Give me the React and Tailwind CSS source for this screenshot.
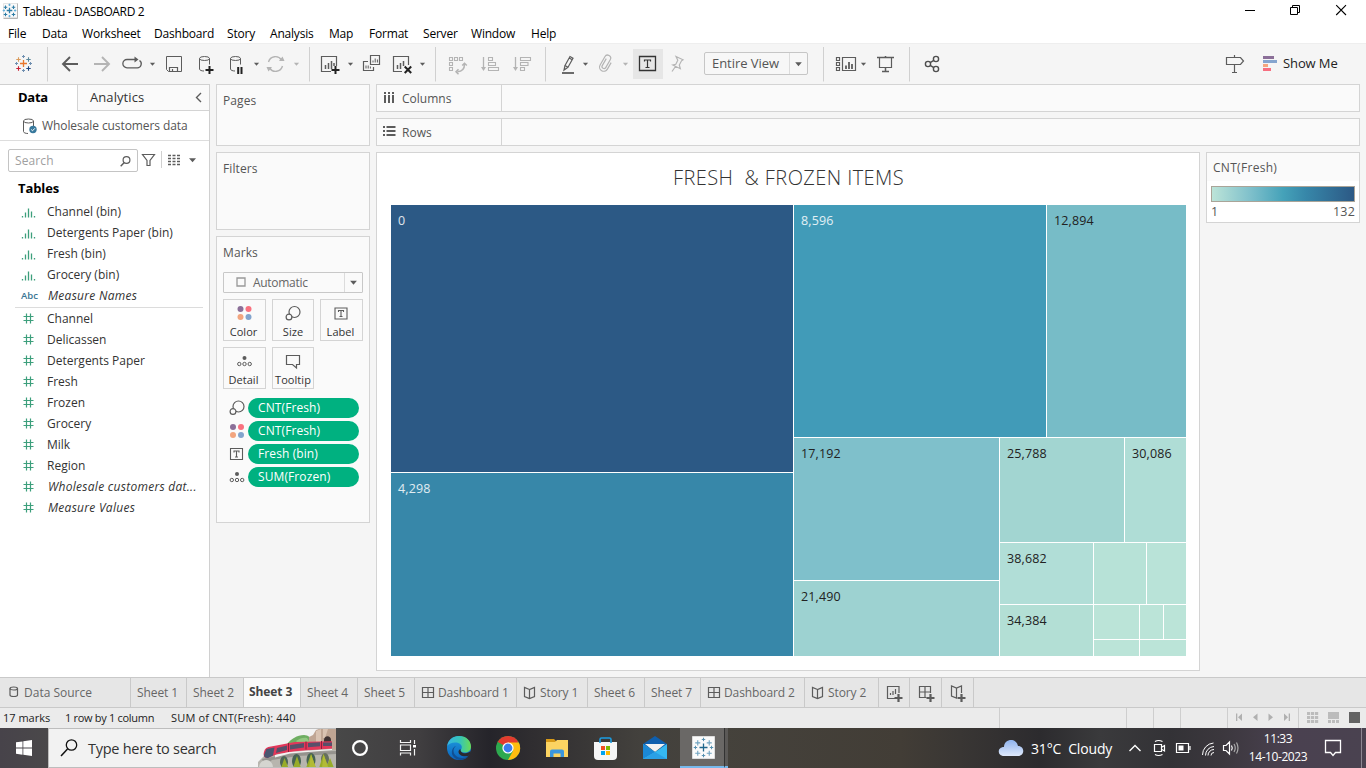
import React from "react";

function Ic({ x, y = 44, w, h = 40, children, className = "" }) {
  return (
    <svg
      className={"block shrink-0 " + className}
      width={w}
      height={h}
      viewBox={`${x} ${y} ${w} ${h}`}
      fill="none"
      stroke="#5c5c5c"
      strokeWidth="1"
    >
      {children}
    </svg>
  );
}

const Caret = ({ x, y = 64, c = "#5c5c5c", s = 2.6 }) => (
  <path d={`M${x - s} ${y - s / 2}h${s * 2}l${-s} ${s * 1.15}z`} fill={c} stroke="none" />
);

const Plus = ({ x, y, r, c, w = 1 }) => (
  <path d={`M${x - r} ${y}H${x + r}M${x} ${y - r}V${y + r}`} stroke={c} strokeWidth={w} />
);

const Sep = ({ x }) => <path d={`M${x + 0.5} 47V81.5`} stroke="#d0d0d0" />;

function TableauMark({ x, y, k = 1, colors }) {
  const [a, b, c, d, e, f] = colors;
  return (
    <g>
      <Plus x={x} y={y} r={3.5 * k} c={a} w={1.3} />
      <Plus x={x - 5 * k} y={y - 4 * k} r={2.2 * k} c={b} w={1.1} />
      <Plus x={x + 5 * k} y={y - 4 * k} r={2.2 * k} c={c} w={1.1} />
      <Plus x={x - 5 * k} y={y + 5 * k} r={2.2 * k} c={d} w={1.1} />
      <Plus x={x + 5 * k} y={y + 5 * k} r={2.2 * k} c={e} w={1.1} />
      <Plus x={x} y={y - 7 * k} r={1.5 * k} c={f} />
      <Plus x={x} y={y + 7 * k} r={1.5 * k} c={f} />
      <Plus x={x - 7 * k} y={y} r={1.5 * k} c={f} />
      <Plus x={x + 7 * k} y={y} r={1.5 * k} c={f} />
    </g>
  );
}

const Cyl = ({ x, y }) => (
  <g>
    <ellipse cx={x + 5.5} cy={y + 2.5} rx="5" ry="2" />
    <path d={`M${x + 0.5} ${y + 2.5}v10.5c0 1.2 2 2 4.5 2M${x + 10.5} ${y + 2.5}v6`} />
  </g>
);

function TitleBar() {
  return (
    <div className="flex h-[22px] items-center bg-white">
      <Ic x={0} y={0} w={22} h={22}>
        <path d="M3.5 3.5h14v14h-14z" fill="#fafafa" stroke="#e4e4e4" />
        <path d="M17.5 3.5v15h-14" stroke="#b5b5b5" />
        <TableauMark x={9.5} y={10.5} k={0.8} colors={["#2e7da6", "#2e7da6", "#2e7da6", "#2e7da6", "#2e7da6", "#67b0d8"]} />
      </Ic>
      <span className="ml-[1px] pt-[2px] text-[12px] leading-[22px] tracking-[-0.34px] text-black">Tableau - DASBOARD 2</span>
      <div className="flex-1" />
      <Ic x={1230} y={0} w={136} h={22}>
        <g stroke="#000">
          <path d="M1245 10.5h10" />
          <path d="M1290.5 7.5h7v7h-7zM1292.5 7.5v-2h7v7h-2" />
          <path d="M1336.2 5.2l9.8 9.8M1346 5.2l-9.8 9.8" strokeWidth="1.1" />
        </g>
      </Ic>
    </div>
  );
}

const menus = [
  ["File", "w-[34px]"],
  ["Data", "w-[40px]"],
  ["Worksheet", "w-[72px]"],
  ["Dashboard", "w-[73px]"],
  ["Story", "w-[43px]"],
  ["Analysis", "w-[59px]"],
  ["Map", "w-[40px]"],
  ["Format", "w-[54px]"],
  ["Server", "w-[48px]"],
  ["Window", "w-[60px]"],
  ["Help", "w-[40px]"],
];

function MenuBar() {
  return (
    <div className="flex h-[21px] bg-white pl-[8px] text-[12px] leading-[24px] tracking-[-0.2px] text-black">
      {menus.map(([m, w]) => (
        <span key={m} className={w + " whitespace-nowrap"}>{m}</span>
      ))}
    </div>
  );
}

const L = "#b4b4b4";

function Toolbar() {
  return (
    <div className="flex h-[41px] items-start border-t border-[#eeeeee] bg-[#f5f5f5]">
      <Ic x={0} w={309}>
        <TableauMark x={23.5} y={63.5} k={1} colors={["#e8762c", "#d99a5b", "#5b879b", "#c72035", "#1f447e", "#6f8fb0"]} />
        <Sep x={47} />
        <path d="M63 64h15M70 57l-7 7 7 7" strokeWidth="1.9" />
        <path d="M94 64h15M102 57l7 7-7 7" strokeWidth="1.9" stroke={L} />
        <path d="M131 59.5h-4a4 4 0 0 0 0 8.300h10a4 4 0 0 0 2.500-7.300M130 59.500h7" strokeWidth="1.3" />
        <path d="M134.500 56.500v6l4-3z" fill="#5c5c5c" stroke="none" />
        <Caret x={152.500} />
        <path d="M166.500 56.500h15v15h-13l-2-2z" />
        <path d="M169.500 71.500v-4h8v4M172.500 69v2.500" strokeWidth="1.200" />
        <Cyl x={199} y={56} />
        <Plus x={209.500} y={70} r={4} c="#222" w={2} />
        <Cyl x={230} y={56} />
        <path d="M238.200 67v7M241.500 67v7" stroke="#222" strokeWidth="2" />
        <Caret x={256.500} />
        <g stroke={L} strokeWidth="1.400">
          <path d="M268.500 62a7.200 7.200 0 0 1 13-2M282.500 66a7.200 7.200 0 0 1-13 2" />
          <path d="M279 61h5.500l-2-4.500zM272 67h-5.500l2 4.500z" fill={L} stroke="none" />
        </g>
        <Caret x={296.500} c={L} />
      </Ic>
      <Ic x={309} w={126}>
        <Sep x={309} />
        <path d="M336.500 66v-9.500h-15v15h9.500" strokeWidth="1.200" />
        <path d="M325.500 69v-4M328.500 69v-6M331.500 69v-8M334 66v-3" strokeWidth="1.500" />
        <Plus x={335.500} y={70} r={4} c="#222" w={2} />
        <Caret x={350.500} />
        <path d="M370.500 55.500h9v9h-9zM368 61.500h-4.500v9h10v-3.500" strokeWidth="1.200" />
        <path d="M373 62.500v-2M375.200 62.500v-4M377.400 62.500v-3M366 68.500v-3M368.200 68.500v-3M370.400 68.500v-2" />
        <path d="M408.500 65v-8.500h-15v15h8.500" strokeWidth="1.200" />
        <path d="M397.500 69v-4M400.500 69v-6M403.500 66v-5" strokeWidth="1.500" />
        <path d="M404.700 66.500l6.500 6.500M411.200 66.500l-6.500 6.500" stroke="#222" strokeWidth="2" />
        <Caret x={422.500} />
      </Ic>
      <Ic x={435} w={198}>
        <Sep x={435} />
        <g stroke={L} strokeWidth="1.100">
          <path d="M449.500 57.500h3v3h-3zM454.500 57.500h3v3h-3zM459.500 57.500h3v3h-3zM449.500 62.500h3v3h-3zM449.500 67.500h3v3h-3z" />
          <path d="M464.500 64c0 4.500-2.500 7.500-7 7.700M462.200 65.500l2.300-2.300 2.300 2.300M458.500 69.200l-2.500 2.500 2.500 2.500" strokeWidth="1.500" />
          <path d="M483.500 57v12M515.500 57v12" strokeWidth="1.300" />
          <path d="M481 67h5l-2.500 4zM513 67h5l-2.500 4z" fill={L} stroke="none" />
          <path d="M488.500 57.500h4v3h-4zM488.500 62.500h7v3h-7zM488.500 67.500h10v3h-10z" />
          <path d="M520.500 57.500h10v3h-10zM520.500 62.500h7.500v3h-7.500zM520.500 67.500h4v3h-4z" />
        </g>
        <Sep x={545} />
        <path d="M565 65.500l5-9 3 1.700-5 9zM565 65.500l-1 4.500 4-2.800M569.200 58l3 1.700" strokeWidth="1.200" />
        <path d="M562 73h12" strokeWidth="1.800" />
        <Caret x={585.500} />
        <g transform="rotate(30 605.5 64)">
          <path d="M603.500 59v8a2 2 0 0 0 4 0v-9a3.100 3.100 0 0 0-6.200 0v9.500a4.200 4.200 0 0 0 8.400 0V60" stroke={L} strokeWidth="1.200" />
        </g>
        <Caret x={625.500} c={L} />
      </Ic>
      <Ic x={633} w={71}>
        <path d="M633 49h30v30h-30z" fill="#e6e6e6" stroke="none" />
        <path d="M639.500 56.500h16v14h-16z" stroke="#333" strokeWidth="1.300" />
        <path d="M644.500 61.500v-1.500h6v1.500M647.500 60v7.500M645.500 67.500h4" stroke="#333" strokeWidth="1.200" />
        <path d="M676 56.500l7 3.300-1.500 1-2.200 4.200 1 3.700-7.500-3.700 3-.7 2-4zM675.500 66.500l-3.500 5" stroke={L} strokeWidth="1.200" />
      </Ic>
      <div className="mt-[8px] flex h-[23px] w-[104px] shrink-0 items-center rounded-[2px] border border-[#c6c6c6] bg-[#f7f7f7]">
        <span className="w-[84px] whitespace-nowrap pl-[7px] text-[13px] leading-[21px] tracking-[-0.05px] text-[#555]">Entire View</span>
        <Ic x={789} y={53} w={18} h={21}>
          <path d="M789.500 53v21" stroke="#dcdcdc" />
          <Caret x={798.500} y={64} s={3.300} />
        </Ic>
      </div>
      <Ic x={808} w={152}>
        <Sep x={823} />
        <path d="M836.500 57.500h3v3h-3zM836.500 62.500h3v3h-3zM836.500 67.500h3v3h-3zM842.500 57.500h13v13h-13z" strokeWidth="1.200" />
        <path d="M846 69v-3.500M849 69v-7M852 69v-5" strokeWidth="1.800" />
        <Caret x={863.500} />
        <path d="M877 57.500h17M885.500 56v2M885.500 68v4M882 71.500h7" strokeWidth="1.500" />
        <path d="M879.500 58v9.500h12v-9.500" strokeWidth="1.200" />
        <Sep x={909} />
        <g strokeWidth="1.400" stroke="#4f4f4f">
          <circle cx="928" cy="64" r="2.600" />
          <circle cx="936" cy="59" r="2.600" />
          <circle cx="936" cy="69" r="2.600" />
          <path d="M930.200 62.700l3.600-2.300M930.200 65.300l3.600 2.300" />
        </g>
      </Ic>
      <div className="flex-1" />
      <Ic x={1220} w={62}>
        <path d="M1226.500 57.500h14l3 3.500-3 3.500h-14zM1234.500 55v2M1234.500 64.500v8M1232 72.500h5" strokeWidth="1.200" />
        <g stroke="none">
          <path d="M1263 56h11v3h-11z" fill="#8b6f98" />
          <path d="M1263 60h14v3h-14z" fill="#85a5cf" />
          <path d="M1263 64h5v3h-5z" fill="#f4a67e" />
          <path d="M1263 68h8v3h-8z" fill="#f76f80" />
        </g>
      </Ic>
      <span className="w-[84px] whitespace-nowrap pl-px text-[13px] leading-[39px] tracking-[-0.1px] text-[#222]">Show Me</span>
    </div>
  );
}

const bins = ["Channel (bin)", "Detergents Paper (bin)", "Fresh (bin)", "Grocery (bin)"];
const measures = ["Channel", "Delicassen", "Detergents Paper", "Fresh", "Frozen", "Grocery", "Milk", "Region"];

const Hash = () => (
  <Ic x={0} y={0} w={30} h={20}>
    <path d="M11.500 4.500v10M15.500 4.500v10M8.500 7.500h10M8.500 11.500h10" stroke="#3d9f7c" strokeWidth="1.200" />
  </Ic>
);

function Field({ icon, children, italic }) {
  return (
    <div className="flex h-[21px] items-center pl-[15px]">
      <div className="w-[32px] shrink-0">{icon}</div>
      <span className={"whitespace-nowrap pt-px text-[12px] leading-[20px] text-[#333] " + (italic ? "pl-px italic tracking-[0.28px]" : "tracking-[0px]")}>{children}</span>
    </div>
  );
}

function DataPane() {
  return (
    <div className="flex w-[210px] shrink-0 flex-col border-r border-t border-[#d0d0d0] bg-white">
      <div className="flex h-[26px] shrink-0 text-[13px] leading-[25px]">
        <span className="w-[77px] pl-[18px] font-bold tracking-[-0.25px] text-black">Data</span>
        <div className="flex flex-1 items-center justify-between border-b border-l border-[#d4d4d4] bg-[#fafafa] pl-[12px] pr-[7px] tracking-[0.08px] text-[#333]">
          <span>Analytics</span>
          <Ic x={195} y={90} w={7} h={14}><path d="M201 92l-4.500 4.500 4.500 4.500" strokeWidth="1.400" /></Ic>
        </div>
      </div>
      <div className="flex h-[30px] shrink-0 items-center border-b border-[#dddddd] pl-[22px]">
        <Ic x={21} y={115} w={20} h={20}>
          <g transform="translate(0 1)"><Cyl x={22} y={116.500} /></g>
          <circle cx="32" cy="128.500" r="3.700" fill="#37789c" stroke="none" />
          <path d="M30.200 128.500l1.300 1.300 2.400-2.500" stroke="#fff" />
        </Ic>
        <span className="whitespace-nowrap text-[12px] leading-[20px] tracking-[-0.08px] text-[#555]">Wholesale customers data</span>
      </div>
      <div className="mt-[8px] flex h-[23px] shrink-0 items-center pl-[8px]">
        <div className="flex h-[23px] w-[130px] items-center justify-between rounded-[2px] border border-[#c4c4c4] pl-[6px] pr-[5px]">
          <span className="text-[12px] tracking-[0.1px] text-[#a0a0a0]">Search</span>
          <Ic x={120} y={153} w={12} h={14}>
            <circle cx="126.500" cy="159" r="3.400" strokeWidth="1.200" /><path d="M124 161.700l-3.300 3.500" strokeWidth="1.400" />
          </Ic>
        </div>
        <Ic x={138} y={149} w={64} h={23}>
          <path d="M142.500 154.500h12l-4.500 6v5h-3v-5z" strokeWidth="1.200" />
          <path d="M161.500 151v17" stroke="#d0d0d0" />
          <path d="M168 155.500h12M168 158.500h12M168 161.500h12M168 164.500h12" strokeDasharray="3 1.500" strokeWidth="1.300" />
          <Caret x={192.500} y={160} s={3.500} />
        </Ic>
      </div>
      <div className="mt-[5px] h-[24px] shrink-0 pl-[18px] text-[13px] font-bold leading-[22px] tracking-[-0.1px] text-black">Tables</div>
      {bins.map((b) => (
        <Field
          key={b}
          icon={
            <Ic x={0} y={0} w={30} h={20}>
              <path d="M7.500 15.500v-1.500M10.500 15.500v-5M13.500 15.500v-9M16.500 15.500v-6M19.500 15.500v-1.500" stroke="#3d9f7c" strokeWidth="1.300" />
            </Ic>
          }
        >
          {b}
        </Field>
      ))}
      <Field italic icon={<div className="pl-[6px] text-[9.5px] font-semibold leading-[20px] text-[#3a7694]">Abc</div>}>Measure Names</Field>
      <div className="ml-[15px] mr-[6px] mt-px h-px shrink-0 bg-[#dcdcdc]" />
      {measures.map((m) => (
        <Field key={m} icon={<Hash />}>{m}</Field>
      ))}
      <Field italic icon={<Hash />}>Wholesale customers dat...</Field>
      <Field italic icon={<Hash />}>Measure Values</Field>
    </div>
  );
}

const ColorDots = ({ x, y }) => (
  <g stroke="none">
    <circle cx={x - 4} cy={y - 4} r="3" fill="#8b6f98" />
    <circle cx={x + 4} cy={y - 4} r="3" fill="#f9717f" />
    <circle cx={x - 4} cy={y + 4} r="3" fill="#f2a57f" />
    <circle cx={x + 4} cy={y + 4} r="3" fill="#82a4cd" />
  </g>
);
const SizeIc = ({ x, y }) => (
  <g strokeWidth="1.200">
    <circle cx={x + 1.500} cy={y - 1} r="5.500" />
    <circle cx={x - 4} cy={y + 4} r="2.900" fill="#fafafa" />
  </g>
);
const LabelIc = ({ x, y }) => (
  <path d={`M${x - 6} ${y - 5.500}h12v11h-12zM${x - 2.500} ${y - 1.500}v-1.500h5v1.500M${x} ${y - 3}v6M${x - 1.500} ${y + 3}h3`} strokeWidth="1.100" />
);
const DetailIc = ({ x, y }) => (
  <g>
    <circle cx={x} cy={y - 3} r="2" fill="#5c5c5c" stroke="none" />
    <circle cx={x - 5.200} cy={y + 3} r="1.700" />
    <circle cx={x} cy={y + 3} r="1.700" />
    <circle cx={x + 5.200} cy={y + 3} r="1.700" />
  </g>
);
const TipIc = ({ x, y }) => <path d={`M${x - 6.500} ${y - 5.500}h13v9h-3v3.500l-4-3.500h-6z`} strokeWidth="1.200" />;

function MarkButton({ icon, label, w }) {
  return (
    <div className={"flex h-[42px] flex-col items-center border border-[#d4d4d4] bg-[#fafafa] " + w}>
      <Ic x={-15} y={-10} w={30} h={20} className="mt-[3px]">{icon}</Ic>
      <span className="whitespace-nowrap text-[11px] leading-[18px] tracking-[0.05px] text-[#333]">{label}</span>
    </div>
  );
}

function Pill({ icon, children }) {
  return (
    <div className="flex h-[23px] items-center">
      <Ic x={-11} y={-10} w={22} h={20}>{icon}</Ic>
      <div className="ml-[2px] h-[20px] w-[111px] rounded-full bg-[#00b180] pl-[10px] text-[12px] leading-[20px] tracking-[0.1px] text-white">{children}</div>
    </div>
  );
}

const cardCls = "border border-[#d4d4d4] bg-[#fafafa] pl-[6px] text-[12px] text-[#555] tracking-[0.1px]";

function Cards() {
  return (
    <div className="ml-[6px] flex w-[154px] shrink-0 flex-col gap-[6px]">
      <div className={cardCls + " h-[62px] leading-[31px]"}>Pages</div>
      <div className={cardCls + " h-[78px] leading-[31px]"}>Filters</div>
      <div className={cardCls + " h-[287px]"}>
        <div className="h-[35px] leading-[31px]">Marks</div>
        <div className="flex h-[21px] w-[140px] items-center rounded-[1px] border border-[#c8c8c8] tracking-normal">
          <Ic x={0} y={0} w={29} h={19}><path d="M13 5h8v8h-8z" stroke="#999" strokeWidth="1.300" /></Ic>
          <span className="w-[91px] text-[12px] leading-[20px] tracking-[-0.3px] text-[#666]">Automatic</span>
          <Ic x={344} y={273} w={17} h={19}>
            <path d="M344.500 273v19" stroke="#dcdcdc" /><Caret x={353.500} y={282.500} s={3.400} />
          </Ic>
        </div>
        <div className="mt-[6px] flex gap-[6px] tracking-normal">
          <MarkButton w="w-[43px] pr-[2px]" icon={<ColorDots x={0.5} y={0} />} label="Color" />
          <MarkButton w="w-[42px]" icon={<SizeIc x={0} y={0} />} label="Size" />
          <MarkButton w="w-[43px] pr-[2px]" icon={<LabelIc x={0} y={0.5} />} label="Label" />
        </div>
        <div className="mb-[7px] mt-[6px] flex gap-[6px] tracking-normal">
          <MarkButton w="w-[43px] pr-[2px]" icon={<DetailIc x={0.5} y={0} />} label="Detail" />
          <MarkButton w="w-[42px]" icon={<TipIc x={0} y={0} />} label="Tooltip" />
        </div>
        <div className="pl-[1px]">
          <Pill icon={<SizeIc x={2} y={-0.5} />}>CNT(Fresh)</Pill>
          <Pill icon={<ColorDots x={2} y={0} />}>CNT(Fresh)</Pill>
          <Pill icon={<LabelIc x={1.500} y={0} />}>Fresh (bin)</Pill>
          <Pill icon={<DetailIc x={2} y={0} />}>SUM(Frozen)</Pill>
        </div>
      </div>
    </div>
  );
}

function Shelf({ icon, label }) {
  return (
    <div className="flex h-[28px] border border-[#d4d4d4] bg-[#fafafa]">
      <div className="flex w-[125px] items-center border-r border-[#d4d4d4] text-[12px] tracking-[0px] text-[#555]">
        <Ic x={0} y={0} w={25} h={26}>{icon}</Ic>
        <span className="pt-px">{label}</span>
      </div>
    </div>
  );
}

function Cell({ c, dark, children }) {
  return (
    <div className={"h-full w-full whitespace-nowrap pl-[7px] pt-[7px] text-[12.5px] leading-[18px] tracking-[0.15px] " + c + (dark ? " text-white/85" : " text-[#222]")}>
      {children}
    </div>
  );
}

function Treemap() {
  return (
    <div className="grid h-[451px] w-[795px] grid-cols-[402px_392px] gap-px">
      <div className="grid grid-rows-[267px_183px] gap-px">
        <Cell c="bg-[#2c5985]" dark>0</Cell>
        <Cell c="bg-[#3787a9]" dark>4,298</Cell>
      </div>
      <div className="grid grid-rows-[232px_218px] gap-px">
        <div className="grid grid-cols-[252px_139px] gap-px">
          <Cell c="bg-[#419bb8]" dark>8,596</Cell>
          <Cell c="bg-[#77bcc7]">12,894</Cell>
        </div>
        <div className="grid grid-cols-[205px_186px] gap-px">
          <div className="grid grid-rows-[142px_75px] gap-px">
            <Cell c="bg-[#7fc0cb]">17,192</Cell>
            <Cell c="bg-[#9dd2d1]">21,490</Cell>
          </div>
          <div className="grid grid-rows-[104px_113px] gap-px">
            <div className="grid grid-cols-[124px_61px] gap-px">
              <Cell c="bg-[#a2d5d1]">25,788</Cell>
              <Cell c="bg-[#afddd6]">30,086</Cell>
            </div>
            <div className="grid grid-cols-[93px_92px] gap-px">
              <div className="grid grid-rows-[61px_51px] gap-px">
                <Cell c="bg-[#b1ded7]">38,682</Cell>
                <Cell c="bg-[#b3dfd5]">34,384</Cell>
              </div>
              <div className="grid grid-rows-[61px_51px] gap-px">
                <div className="grid grid-cols-[52px_39px] gap-px">
                  <div className="bg-[#b7e2d7]" />
                  <div className="bg-[#b9e3d8]" />
                </div>
                <div className="grid grid-rows-[34px_16px] gap-px">
                  <div className="grid grid-cols-[45px_23px_22px] gap-px">
                    <div className="bg-[#bbe4d8]" />
                    <div className="bg-[#bbe4d8]" />
                    <div className="bg-[#bbe4d8]" />
                  </div>
                  <div className="grid grid-cols-[45px_46px] gap-px">
                    <div className="bg-[#bbe4d8]" />
                    <div className="bg-[#bbe4d8]" />
                  </div>
                </div>
              </div>
            </div>
          </div>
        </div>
      </div>
    </div>
  );
}

function Workspace() {
  return (
    <div className="ml-[6px] flex w-[984px] flex-col gap-[6px]">
      <Shelf
        label="Columns"
        icon={<path d="M8 7v2M12 7v2M16 7v2M8 10v8M12 10v8M16 10v8" strokeWidth="2" />}
      />
      <Shelf
        label="Rows"
        icon={<path d="M6 8h2M6 12h2M6 16h2M9.500 8h9M9.500 12h9M9.500 16h9" strokeWidth="2" />}
      />
      <div className="flex gap-[6px]">
        <div className="flex h-[519px] w-[824px] flex-col border border-[#d4d4d4] bg-white pl-[14px]">
          <div className="h-[52px] w-[795px] whitespace-pre text-center text-[20px] font-light leading-[50px] tracking-[0.42px] text-[#333]">FRESH  &amp; FROZEN ITEMS</div>
          <Treemap />
        </div>
        <div className="h-[71px] w-[154px] border border-[#d4d4d4] bg-white text-[12px] text-[#555]">
          <div className="h-[28px] bg-[#fafafa] pl-[6px] leading-[30px] tracking-[0.3px]">CNT(Fresh)</div>
          <div className="ml-[4px] mt-[5px] h-[16px] w-[144px] border border-[#aaa498] bg-[linear-gradient(90deg,#bce4d8_0%,#7fc0cb_27%,#45a2b9_50%,#3787a9_66%,#2c5985_100%)]" />
          <div className="flex justify-between pl-[4px] pr-[4px] text-[12.5px] leading-[20px] tracking-[0.2px]"><span>1</span><span>132</span></div>
        </div>
      </div>
    </div>
  );
}

const DashIc = <path d="M7.500 4.500h11v10h-11zM13 4.500v10M7.500 9.500h11" strokeWidth="1.200" />;
const StoryIc = <path d="M12.500 6.500l-5-2v9l5 2 5-2v-9zM12.500 6.500v9" strokeWidth="1.200" />;

const tabs = [
  ["Sheet 1", "w-[56px]"],
  ["Sheet 2", "w-[57px]"],
  ["Sheet 3", "w-[57px]"],
  ["Sheet 4", "w-[57px]"],
  ["Sheet 5", "w-[57px]"],
  ["Dashboard 1", "w-[102px]", DashIc],
  ["Story 1", "w-[71px]", StoryIc],
  ["Sheet 6", "w-[57px]"],
  ["Sheet 7", "w-[56px]"],
  ["Dashboard 2", "w-[104px]", DashIc],
  ["Story 2", "w-[74px]", StoryIc],
];

function Tabs() {
  return (
    <div className="flex h-[31px] border-b border-t border-[#c9c9c9] bg-[#e6e6e6] text-[12px] leading-[29px] tracking-[-0.1px] text-[#666]">
      <div className="flex w-[131px] items-center border-r border-[#c9c9c9] pl-[8px]">
        <Ic x={0} y={0} w={16} h={20}>
          <path d="M2 5.500v6.500c0 2 7.500 2 7.500 0v-6.500" strokeWidth="1.200" /><ellipse cx="5.750" cy="5.500" rx="3.750" ry="1.500" strokeWidth="1.200" />
        </Ic>
        <span className="tracking-[0px]">Data Source</span>
      </div>
      {tabs.map(([t, w, ic]) => (
        <div
          key={t}
          className={
            "flex items-center whitespace-nowrap border-r border-[#c9c9c9] " + w +
            (t === "Sheet 3" ? " bg-[#fafafa] pb-[2px] pl-[5px] font-bold text-[#444]" : ic ? "" : " pl-[6px]")
          }
        >
          {ic && <Ic x={0} y={0} w={23} h={20}>{ic}</Ic>}
          {t}
        </div>
      ))}
      <div className="flex w-[31px] items-center border-r border-[#c9c9c9]">
        <Ic x={0} y={0} w={30} h={24}>
          <path d="M20 12V5.500H8.500v12h8M11.500 14v-2M14 14v-4M16.500 13v-5" strokeWidth="1.200" /><Plus x={19.500} y={17} r={4} c="#5c5c5c" w={2.200} />
        </Ic>
      </div>
      <div className="flex w-[32px] items-center border-r border-[#c9c9c9]">
        <Ic x={0} y={0} w={30} h={24}>
          <path d="M20.500 12V5.500H9.500v11h7M15 5.500v11M9.500 11H20.500" strokeWidth="1.200" /><Plus x={20.500} y={17} r={4} c="#5c5c5c" w={2.200} />
        </Ic>
      </div>
      <div className="flex w-[32px] items-center border-r border-[#c9c9c9]">
        <Ic x={0} y={0} w={30} h={24}>
          <path d="M19.500 12V5l-5 2-5-2v10l5 2V7" strokeWidth="1.200" /><Plus x={19.500} y={17} r={4} c="#5c5c5c" w={2.200} />
        </Ic>
      </div>
    </div>
  );
}

function StatusBar() {
  return (
    <div className="flex h-[20px] bg-[#ebebeb] text-[11px] leading-[20px] text-[#222]">
      <span className="w-[65px] whitespace-nowrap pl-[3px]">17 marks</span>
      <span className="w-[106px] whitespace-nowrap tracking-[-0.3px]">1 row by 1 column</span>
      <span className="whitespace-nowrap tracking-[0.18px]">SUM of CNT(Fresh): 440</span>
      <div className="flex-1" />
      <Ic x={999} y={708} w={367} h={20}>
        <path d="M999.500 708v20M1126.500 708v20M1153.500 708v20M1180.500 708v20M1227.500 708v20M1298.500 708v20" stroke="#cecece" />
        <g fill="#b0b0b0" stroke="none">
          <path d="M1236 713.500h1.300v7.500h-1.300zM1242 713.500v7.500l-4-3.750zM1257.500 713.500v7.500l-4.500-3.750zM1268.500 713.500v7.500l4.500-3.750zM1284 713.500v7.500l4-3.750zM1288.700 713.500h1.300v7.500h-1.300z" />
          {[0, 4, 8].map((r) => [0, 4, 8].map((c) => <rect key={r + "-" + c} x={1307 + c} y={712 + r} width="3.200" height="3" fill="#bcbcbc" />))}
          <path d="M1328 712h11v7h-11zM1328 720h3v3h-3zM1332 720h3v3h-3zM1336 720h3v3h-3z" fill="#bcbcbc" />
          <path d="M1349 712h11v11h-11z" fill="#636363" />
        </g>
      </Ic>
    </div>
  );
}

function Train() {
  return (
    <Ic x={258} y={729} w={78} h={38}>
      <g stroke="none">
        <path d="M287 744c4-5 10-9 17-9 4 0 7 3 9 6v5h-26z" fill="#6fae62" />
        <path d="M296 741c4-3 8-4 11-3l4 6h-12z" fill="#93c882" />
        <path d="M309 743v-6l4-2 3-5 6-2h12l2 1v39h-27z" fill="#bfa593" />
        <path d="M316 742v-11l5-2v13zM323 738v-9h5l-3 9z" fill="#d9c3b2" />
        <path d="M324 742v-2c0-5 7-5 7 0v3z" fill="#3f3334" />
        <path d="M258 768v-6l7-7 30-4 37-2 4 1v18z" fill="#b7b5ae" />
        <path d="M262 759l34-7 40-1v3l-38 2-26 4-7 6z" fill="#95938e" />
        <path d="M259 768c0-10 14-11 14 0z" fill="#d5d5d0" />
        <ellipse cx="284" cy="762" rx="4" ry="6" fill="#4e6656" />
        <ellipse cx="296.500" cy="761" rx="4.500" ry="7" fill="#466254" />
        <ellipse cx="311" cy="760" rx="4.500" ry="7" fill="#466254" />
        <ellipse cx="325" cy="759" rx="4" ry="6" fill="#66705d" />
        <path d="M281 768l3.500-10 4 10zM293 768l4-12 4 12zM306 768l5-14 5 14zM319 768l4.500-14 5 14zM326 768l4-10 4 10z" fill="#98ac28" />
        <path d="M309 768l2-14 5 14zM322 768l1.500-14 5 14z" fill="#b2bb35" />
        <path d="M264 752c1-4 3-5 7-5.500l24-4.500 37-.8v7.300l-34 2.500-20 3-11 4c-3 0-4-3-3-6z" fill="#e2385a" />
        <path d="M264 755l2.500-6 8-1.500-1.500 8-5 2.500c-3 0-4-1-4-3z" fill="#4a5670" />
        <path d="M277 748l10-2.500v4.500l-11 3zM290 745l14-2v4.500l-14 2zM308 743l12-.8v4l-12 1zM323 742.500h9v3.500h-9z" fill="#57506a" />
        <path d="M275 755l14-3 43-3v1l-42 3.500-15 4z" fill="#fff" opacity=".85" />
        <path d="M288.500 743v9M306 741.500v8M321.500 741v8" stroke="#8c1d3c" />
      </g>
    </Ic>
  );
}

function Taskbar() {
  return (
    <div className="flex h-[40px] bg-[linear-gradient(90deg,#47434a_0px,#4a484a_48px,#484848_336px,#403e40_420px,#25242a_490px,#2f2d30_530px,#43413d_640px,#45423c_720px,#423d36_900px,#393634_960px,#2c2b2e_1040px,#3a3a3c_1100px,#333236_1170px,#3b373d_1220px,#4a4150_1290px,#4a4250_1366px)] text-white">
      <Ic x={0} y={728} w={48} h={40}>
        <path d="M16 742.300l6.500-.9v6.200H16zM23.300 741.300l8.700-1.300v7.600h-8.700zM16 748.400h6.500v6.300l-6.500-.9zM23.300 748.400H32v7.600l-8.700-1.200z" fill="#fff" stroke="none" />
      </Ic>
      <div className="flex w-[288px] shrink-0 items-center border border-r-0 border-[#bdbdbd] bg-[#f2f2f2]">
        <Ic x={49} y={729} w={39} h={38}>
          <circle cx="71.500" cy="745" r="5.200" stroke="#111" strokeWidth="1.300" /><path d="M67.500 749l-6.500 7" stroke="#111" strokeWidth="1.500" />
        </Ic>
        <span className="w-[170px] whitespace-nowrap pt-px text-[14.5px] tracking-[-0.27px] text-[#333]">Type here to search</span>
        <Train />
      </div>
      <Ic x={336} y={728} w={344} h={40}>
        <defs>
          <linearGradient id="edgeTop" x1="0" x2="1"><stop offset="0" stopColor="#35b5e5" /><stop offset=".55" stopColor="#37c5b5" /><stop offset="1" stopColor="#6adb55" /></linearGradient>
          <linearGradient id="edgeLow" x1="0" x2="0" y1="0" y2="1"><stop offset="0" stopColor="#1f9de0" /><stop offset="1" stopColor="#0b63bd" /></linearGradient>
        </defs>
        <circle cx="360" cy="748" r="6.900" stroke="#fff" strokeWidth="2.200" />
        <g stroke="#f4f4f4" strokeWidth="1.200">
          <path d="M400.500 740v2.500h10V740M400.500 755.500v-2.500h10v2.500M400.500 745h10v5.500h-10zM414.500 740v4M414.500 749v6.500" />
          <path d="M413 745h3v2.500h-3z" fill="#fff" stroke="none" />
        </g>
        <g stroke="none">
          <circle cx="459" cy="748" r="12" fill="url(#edgeLow)" />
          <path d="M447.200 746c.8-6 5.600-10 11.800-10 7.500 0 12 5 12 10.500 0 4-3 6-6.200 6-2.500 0-4.200-1-4.200-2 0-.8 1.200-1.500 1.200-3.500 0-2.500-3-4.500-6.600-4.500-3.600 0-6.500 1.500-8 3.500z" fill="url(#edgeTop)" />
          <path d="M456 746c-3 2-3.500 7 .2 10 3.300 2.700 8.300 2.500 12.300.3-3.500 4.700-12 5-15.500-.3-2.500-4-.5-9 3-10z" fill="#114f92" />
          <path d="M460.500 749c-.5 2 1.500 4.500 5 4.300 2-.1 3.800-1 5-2.300.5 1.500-.8 3.500-2 4.700-4 1.300-9.500.3-10-3.700-.1-1.300.9-2.500 2-3z" fill="#2b2a2e" />
          <circle cx="508" cy="748" r="12" fill="#2da94f" />
          <path d="M508 748L497.600 742a12 12 0 0 1 20.800 0z" fill="#e33b2e" />
          <path d="M508 742.500h10.900A12 12 0 0 1 508 760l5-9z" fill="#fdbd10" />
          <path d="M508 748l-4.700 3-5.700-9z" fill="#2da94f" />
          <circle cx="508" cy="748" r="5.600" fill="#fff" />
          <circle cx="508" cy="748" r="4.400" fill="#3b7ded" />
          <path d="M546 739h8l2 2h11.500v4H546z" fill="#d89a17" />
          <path d="M546 742h9l2-2h11v17h-22z" fill="#fcd462" />
          <path d="M550 757v-5.500q0-2 2-2h10q2 0 2 2v5.500h-3.500v-3.500h-7v3.500z" fill="#3b96dd" />
          <path d="M594 742h23v14q0 4-4 4h-15q-4 0-4-4z" fill="#f6f6f6" />
          <path d="M601 746h4v4h-4z" fill="#f25022" /><path d="M606 746h4v4h-4z" fill="#7fba00" />
          <path d="M601 751h4v4h-4z" fill="#00a4ef" /><path d="M606 751h4v4h-4z" fill="#ffb900" />
        </g>
        <path d="M600 743v-3.500q0-1.500 1.500-1.500h8q1.500 0 1.500 1.500v3.500" stroke="#1b9de2" strokeWidth="1.600" />
        <g stroke="none">
          <path d="M643 744l12-8 12 8v4h-24z" fill="#0f5fae" />
          <path d="M645 744h20l-10 8z" fill="#f2f2f2" />
          <path d="M643 744l12 8 12-8v15h-24z" fill="#35b8f1" />
          <path d="M643 744l12 8-12 7z" fill="#1b88d6" /><path d="M643 759l12-7 12 7z" fill="#2aa0e6" />
        </g>
      </Ic>
      <div className="flex w-[44px] shrink-0 border-b-2 border-[#76b9ed] bg-[#6a6866]">
        <Ic x={680} y={728} w={44} h={38}>
          <path d="M692.500 736.500h22v22h-22z" fill="#fafafa" stroke="#ddd" />
          <TableauMark x={703.500} y={747.500} k={1.150} colors={["#20678c", "#6fa3c0", "#6fa3c0", "#6fa3c0", "#6fa3c0", "#5590b1"]} />
        </Ic>
      </div>
      <div className="w-[4px] shrink-0 border-b-2 border-l border-b-[#76b9ed] border-l-[#333] bg-[#5b5957]" />
      <div className="flex-1" />
      <Ic x={996} y={728} w={34} h={40}>
        <defs><linearGradient id="cloud" x1="0" x2="0" y1="0" y2="1"><stop offset="0" stopColor="#8fb3ee" /><stop offset="1" stopColor="#dfe9fb" /></linearGradient></defs>
        <path d="M1004 756c-7 0-7-9 0-9 0-8 12-10 14-1 7 0 7 10 0 10z" fill="url(#cloud)" stroke="none" />
      </Ic>
      <span className="w-[98px] whitespace-pre pl-px text-[14px] leading-[42px] tracking-[-0.15px]">31°C  Cloudy</span>
      <Ic x={1128} y={728} w={120} h={40}>
        <g stroke="#fff" strokeWidth="1.200">
          <path d="M1129.500 751l5.500-5.500 5.500 5.500" strokeWidth="1.400" />
          <path d="M1154.500 744.500h7v7h-7zM1162 747l2.500-1.500v5.500l-2.500-1.500M1155 741.500q3.500-2 7.500 0M1155 754.500q3.500 2 7.500 0" />
          <path d="M1176.500 743.500h12v9h-12zM1190 746v4" /><path d="M1178.500 745.500h5v5h-5z" fill="#fff" stroke="none" />
          <path d="M1202.500 755a12 12 0 0 1 11-12M1205.500 755.500a9 9 0 0 1 8.500-9M1208 755.500a6 6 0 0 1 6-6M1211 755.500a3 3 0 0 1 3-3" strokeWidth="1" />
          <path d="M1223.500 745.500h2.500l3.500-3.500v12l-3.500-3.500h-2.500zM1231.500 745.500q1.500 2.500 0 5" />
          <path d="M1234 744q2.500 4 0 8M1236.500 742.500q3 5.500 0 11" stroke="#aaa" />
        </g>
      </Ic>
      <div className="flex w-[60px] shrink-0 flex-col items-center whitespace-nowrap text-[12px] leading-[18px] tracking-[-0.42px]">
        <span className="mt-[2px]">11:33</span>
        <span>14-10-2023</span>
      </div>
      <Ic x={1308} y={728} w={58} h={40}>
        <path d="M1325.500 740.500h15v12h-5l-2.500 3-2.500-3h-5z" stroke="#fff" strokeWidth="1.300" />
        <path d="M1361.500 728v40" stroke="#8d8792" />
      </Ic>
    </div>
  );
}

export default function App() {
  return (
    <div className="flex h-[768px] w-[1366px] flex-col overflow-hidden bg-[#f5f5f5] font-['Open_Sans','Noto_Sans',sans-serif]">
      <TitleBar />
      <MenuBar />
      <Toolbar />
      <div className="flex h-[593px]">
        <DataPane />
        <Cards />
        <Workspace />
      </div>
      <Tabs />
      <StatusBar />
      <Taskbar />
    </div>
  );
}
